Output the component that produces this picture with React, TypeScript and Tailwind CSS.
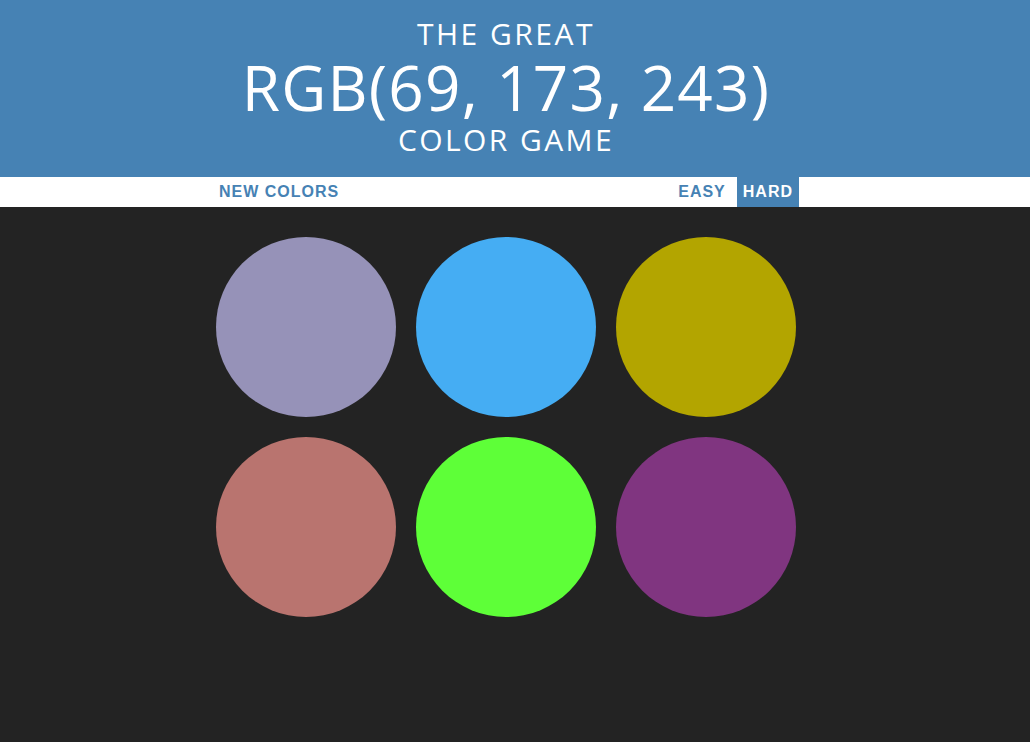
import React from 'react';

const colors = ['#9692b8', '#45adf3', '#b3a500', '#b9746f', '#5eff38', '#803580'];

export default function App() {
  return (
    <div className="min-h-[742px] bg-[#232323]" style={{ fontFamily: '"Liberation Sans", Arial, sans-serif' }}>
      <header className="bg-[#4682b4] pr-[18px] pt-[15px] pb-[18px] text-center text-white" style={{ fontFamily: '"Open Sans", sans-serif' }}>
        <div className="text-[30px] leading-[38px] font-normal tracking-[2.5px]">THE GREAT</div>
        <div className="text-[62px] leading-[68px] font-normal tracking-[1.2px]">RGB(69, 173, 243)</div>
        <div className="text-[30px] leading-[38px] font-normal tracking-[2.4px]">COLOR GAME</div>
      </header>
      <div className="h-[30px] bg-white pr-[18px]">
        <div className="mx-auto flex h-full w-[586px] items-stretch">
          <button className="h-full px-[6px] text-[16px] font-bold uppercase tracking-[1px] text-[#4682b4]">New Colors</button>
          <span className="flex-1" />
          <button className="mr-px h-full px-[6px] text-[16px] font-bold uppercase tracking-[1px] text-[#4682b4]">Easy</button>
          <button className="ml-[4px] h-full bg-[#4682b4] px-[6px] text-[16px] font-bold uppercase tracking-[1px] text-white">Hard</button>
        </div>
      </div>
      <div className="pr-[18px]">
        <div className="mx-auto grid w-[600px] grid-cols-3 gap-x-[20px] gap-y-[20px] px-[10px] pt-[30px]">
          {colors.map(c => (
            <div key={c} className="h-[180px] w-[180px] rounded-full" style={{ background: c }} />
          ))}
        </div>
      </div>
    </div>
  );
}
